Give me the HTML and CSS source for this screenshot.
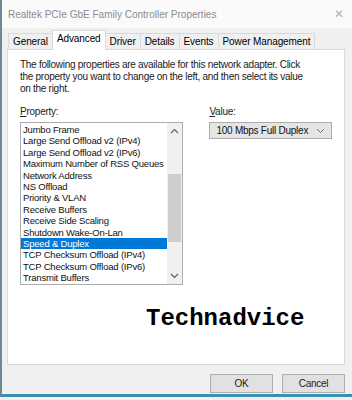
FILE: index.html
```html
<!DOCTYPE html>
<html lang="en">
<head>
    <meta charset="UTF-8">
    <meta name="viewport" content="width=device-width, initial-scale=1.0">
    <title>Realtek PCIe GbE Family Controller Properties</title>
    <link rel="stylesheet" href="styles.css">
</head>
<body>
    <div class="window">
      <div class="titlebar">
        <span class="title">Realtek PCIe GbE Family Controller Properties</span>
        <span class="close">&#x2715;</span>
      </div>

      <div class="tabs">
        <div class="tab">General</div>
        <div class="tab active">Advanced</div>
        <div class="tab">Driver</div>
        <div class="tab">Details</div>
        <div class="tab">Events</div>
        <div class="tab">Power Management</div>
      </div>

      <div class="panel">
        <p class="intro">The following properties are available for this network adapter. Click the property you want to change on the left, and then select its value on the right.</p>

        <div class="fields">
          <div class="property">
            <label><u>P</u>roperty:</label>
            <div class="listbox">
              <ul class="items">
                <li>Jumbo Frame</li>
                <li>Large Send Offload v2 (IPv4)</li>
                <li>Large Send Offload v2 (IPv6)</li>
                <li>Maximum Number of RSS Queues</li>
                <li>Network Address</li>
                <li>NS Offload</li>
                <li>Priority &amp; VLAN</li>
                <li>Receive Buffers</li>
                <li>Receive Side Scaling</li>
                <li>Shutdown Wake-On-Lan</li>
                <li class="selected">Speed &amp; Duplex</li>
                <li>TCP Checksum Offload (IPv4)</li>
                <li>TCP Checksum Offload (IPv6)</li>
                <li>Transmit Buffers</li>
              </ul>
              <div class="scrollbar">
                <svg class="arrow" width="9" height="6" viewBox="0 0 9 6"><path d="M1 5 L4.5 1.5 L8 5" fill="none" stroke="#606060" stroke-width="1.2"/></svg>
                <div class="track"><div class="thumb"></div></div>
                <svg class="arrow" width="9" height="6" viewBox="0 0 9 6"><path d="M1 1 L4.5 4.5 L8 1" fill="none" stroke="#606060" stroke-width="1.2"/></svg>
              </div>
            </div>
          </div>

          <div class="value">
            <label><u>V</u>alue:</label>
            <div class="select">
              <span>100 Mbps Full Duplex</span>
              <svg width="9" height="6" viewBox="0 0 9 6"><path d="M1 1 L4.5 4.5 L8 1" fill="none" stroke="#707070" stroke-width="1"/></svg>
            </div>
          </div>
        </div>

        <div class="brand">Technadvice</div>
      </div>

      <div class="footer">
        <button type="button">OK</button>
        <button type="button">Cancel</button>
      </div>
    </div>
</body>
</html>
```

FILE: styles.css
```css
body {
  margin: 0;
  width: 352px;
  height: 400px;
  overflow: hidden;
  background-color: #f0f0f0;
  font-family: "Liberation Sans", Arial, sans-serif;
  font-size: 10px;
  letter-spacing: -0.25px;
  color: #000;
}

.window {
  height: 397px;
  border-left: 2px solid #6d8a94;
  border-bottom: 3px solid #3b8fb0;
  background-color: #f0f0f0;
  box-sizing: border-box;
}

.titlebar {
  display: flex;
  justify-content: space-between;
  align-items: center;
  height: 28px;
  padding: 0 8px 0 6px;
  background-color: #fafafa;
}

.title {
  font-size: 10px;
  letter-spacing: 0;
  color: #8c8c8c;
}

.close {
  font-size: 12px;
  color: #b0b0b0;
}

.tabs {
  display: flex;
  align-items: flex-end;
  height: 21px;
  padding-left: 6px;
}

.tab {
  height: 15px;
  line-height: 15px;
  padding: 0 4px;
  border: 1px solid #d9d9d9;
  border-bottom: none;
  margin-right: -1px;
  letter-spacing: -0.1px;
  background-color: #f0f0f0;
}

.tab.active {
  position: relative;
  z-index: 1;
  height: 19px;
  line-height: 16px;
  margin-bottom: -1px;
  background-color: #fff;
}

.panel {
  height: 316px;
  margin: 0 7px 0 5px;
  padding: 9px 12px 0 12px;
  border: 1px solid #d9d9d9;
  background-color: #fff;
  box-sizing: border-box;
}

.intro {
  width: 290px;
  margin: 0;
  line-height: 12px;
  letter-spacing: -0.28px;
  color: #1a1a1a;
}

.fields {
  display: flex;
  margin-top: 11px;
}

.property {
  width: 164px;
}

.value {
  margin-left: 26px;
  width: 123px;
}

label {
  display: block;
  height: 13px;
  margin-bottom: 3px;
  color: #222;
}

.listbox {
  display: flex;
  height: 163px;
  border: 1px solid #adadad;
  box-sizing: border-box;
}

.items {
  flex: 1;
  margin: 0;
  padding: 1px 0 0 0;
  list-style: none;
  font-size: 9.5px;
  letter-spacing: -0.2px;
}

.items li {
  height: 11.4px;
  line-height: 11.4px;
  padding-left: 2px;
  white-space: nowrap;
  color: #111;
}

.items li.selected {
  background-color: #0078d7;
  color: #fff;
}

.scrollbar {
  display: flex;
  flex-direction: column;
  align-items: center;
  width: 15px;
  padding: 5px 0;
  background-color: #f0f0f0;
}

.track {
  flex: 1;
  width: 100%;
  padding-top: 40px;
}

.thumb {
  width: 13px;
  height: 68px;
  margin: 0 auto;
  background-color: #cdcdcd;
}

.select {
  display: flex;
  justify-content: space-between;
  align-items: center;
  height: 17px;
  padding: 0 6px;
  border: 1px solid #adadad;
  background-color: #e5e5e5;
  box-sizing: border-box;
  color: #111;
}

.brand {
  margin: 20px 0 0 126px;
  font-family: "Liberation Mono", "Courier New", monospace;
  font-weight: bold;
  font-size: 24px;
  letter-spacing: 0;
  color: #000;
}

.footer {
  display: flex;
  justify-content: flex-end;
  padding: 9px 7px 0 0;
}

button {
  width: 63px;
  height: 19px;
  margin-left: 9px;
  padding: 0;
  border: 1px solid #adadad;
  background-color: #e1e1e1;
  font-family: "Liberation Sans", Arial, sans-serif;
  font-size: 10px;
  letter-spacing: -0.25px;
  color: #222;
}
```
